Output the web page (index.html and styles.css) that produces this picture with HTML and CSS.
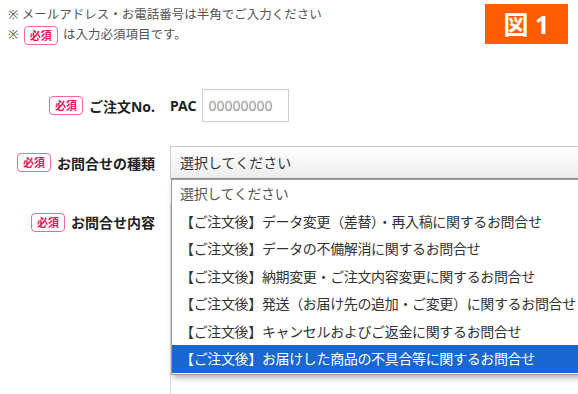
FILE: index.html
```html
<!DOCTYPE html>
<html lang="ja">
<head>
  <meta charset="UTF-8">
  <title>お問合せフォーム</title>
  <link rel="stylesheet" href="styles.css">
</head>
<body>

  <div class="notes">
    <p>※ メールアドレス・お電話番号は半角でご入力ください</p>
    <p>※ <span class="req">必須</span> は入力必須項目です。</p>
    <div class="fig">図 1</div>
  </div>

  <div class="form">

    <div class="row">
      <div class="label"><span class="req">必須</span>ご注文No.</div>
      <div class="field">
        <span class="prefix">PAC</span>
        <input type="text" class="order-no" placeholder="00000000">
      </div>
    </div>

    <div class="row">
      <div class="label"><span class="req">必須</span>お問合せの種類</div>
      <div class="field">
        <div class="select">選択してください</div>
        <ul class="options">
          <li>選択してください</li>
          <li>【ご注文後】データ変更（差替）・再入稿に関するお問合せ</li>
          <li>【ご注文後】データの不備解消に関するお問合せ</li>
          <li>【ご注文後】納期変更・ご注文内容変更に関するお問合せ</li>
          <li>【ご注文後】発送（お届け先の追加・ご変更）に関するお問合せ</li>
          <li>【ご注文後】キャンセルおよびご返金に関するお問合せ</li>
          <li class="active">【ご注文後】お届けした商品の不具合等に関するお問合せ</li>
        </ul>
      </div>
    </div>

    <div class="row top">
      <div class="label"><span class="req">必須</span>お問合せ内容</div>
      <div class="field">
        <textarea class="message"></textarea>
      </div>
    </div>

  </div>

</body>
</html>
```

FILE: styles.css
```css
body {
  margin: 0;
  padding: 5px 0 0 8px;
  width: 570px;
  height: 389px;
  overflow: hidden;
  background: #fff;
  color: #333;
  font-family: "Noto Sans", "Noto Sans CJK JP", sans-serif;
}

.notes {
  position: relative;
  font-size: 12.5px;
  color: #555;
}

.notes p {
  margin: 0;
  line-height: 20px;
}

.fig {
  position: absolute;
  top: -1px;
  right: 10px;
  width: 83px;
  height: 40px;
  background: #ff5c00;
  color: #fff;
  font-size: 25px;
  font-weight: bold;
  line-height: 40px;
  text-align: center;
}

.req {
  display: inline-block;
  box-sizing: border-box;
  width: 34px;
  height: 19px;
  border: 1px solid #f4679b;
  border-radius: 4px;
  color: #e8185a;
  font-size: 11px;
  font-weight: bold;
  line-height: 17px;
  text-align: center;
  vertical-align: middle;
}

.notes .req {
  margin: 0 2px;
}

.form {
  margin-top: 44px;
}

.row {
  display: flex;
  align-items: center;
  gap: 15px;
  margin-bottom: 24px;
}

.row.top {
  align-items: flex-start;
}

.label {
  flex: none;
  width: 147px;
  display: flex;
  align-items: center;
  justify-content: flex-end;
  gap: 6px;
  font-size: 14px;
  font-weight: bold;
  color: #222;
  white-space: nowrap;
}

.row.top .label {
  margin-top: 9px;
}

.field {
  position: relative;
  flex: none;
  display: flex;
  align-items: center;
  gap: 6px;
}

.prefix {
  font-size: 14px;
  font-weight: bold;
  color: #222;
}

.order-no {
  box-sizing: border-box;
  width: 87px;
  height: 33px;
  padding: 0 5px;
  border: 1px solid #ccc;
  font-family: "Noto Sans", sans-serif;
  font-size: 14px;
  color: #333;
}

.order-no::placeholder {
  color: #999;
}

.select {
  box-sizing: border-box;
  width: 460px;
  height: 33px;
  padding: 0 9px;
  border: 1px solid #ccc;
  border-bottom-color: #999;
  background: linear-gradient(#fff, #ececec);
  font-size: 14px;
  line-height: 31px;
  color: #333;
}

.options {
  position: absolute;
  top: 33px;
  left: 1px;
  z-index: 2;
  width: 440px;
  margin: 0;
  padding: 0 0 1px;
  list-style: none;
  background: #fff;
  border: 1px solid #999;
  box-shadow: 2px 3px 6px rgba(0, 0, 0, 0.3);
}

.options li {
  height: 27.5px;
  padding: 0 8px;
  font-size: 14px;
  letter-spacing: -0.35px;
  line-height: 27px;
  color: #333;
  white-space: nowrap;
}

.options li:first-child {
  color: #555;
}

.options li.active {
  background: #1a66d2;
  color: #fff;
}

.message {
  box-sizing: border-box;
  width: 460px;
  height: 200px;
  border: 1px solid #ddd;
  resize: none;
}
```
